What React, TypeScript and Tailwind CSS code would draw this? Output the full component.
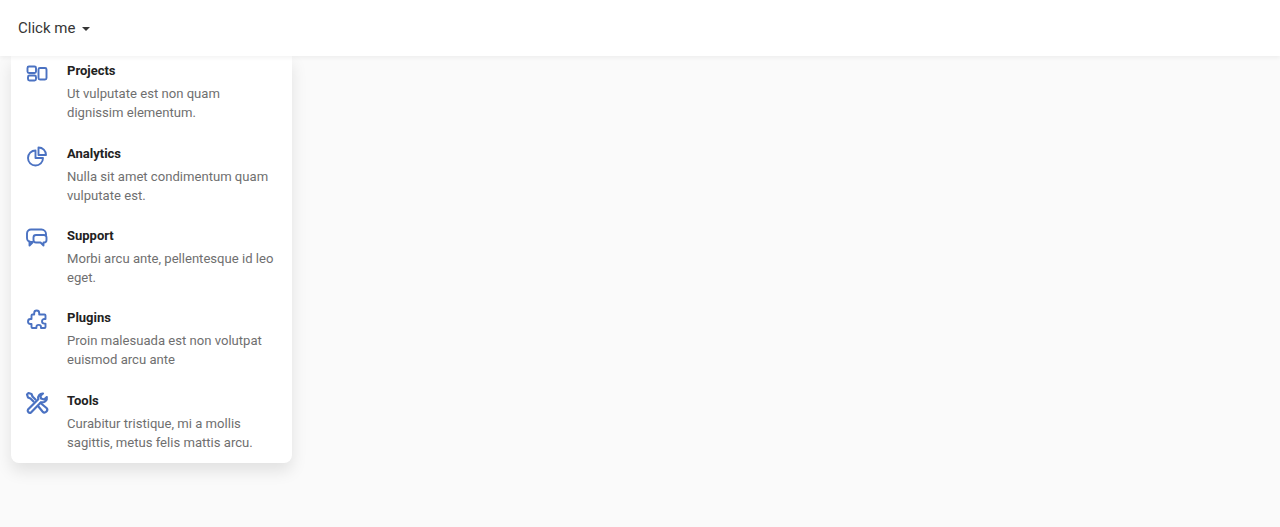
import React from "react";

const stroke = {
  fill: "none",
  stroke: "currentColor",
  strokeWidth: 1.9,
  strokeLinecap: "round" as const,
  strokeLinejoin: "round" as const,
};

function Icon({ children }: { children: React.ReactNode }) {
  return (
    <svg viewBox="0 0 24 24" width="24" height="24" className="shrink-0 text-[#4b72c2]" {...stroke}>
      {children}
    </svg>
  );
}

const items = [
  {
    title: "Projects",
    lines: ["Ut vulputate est non quam", "dignissim elementum."],
    icon: (
      <Icon>
        <rect x="2.500" y="5.500" width="8.500" height="6.500" rx="1.500" />
        <rect x="3" y="14.500" width="8" height="5" rx="1.500" />
        <rect x="13.500" y="7" width="8" height="11.500" rx="1.500" />
      </Icon>
    ),
  },
  {
    title: "Analytics",
    lines: ["Nulla sit amet condimentum quam", "vulputate est."],
    icon: (
      <Icon>
        <path d="M10.500 6.500a7.500 7.500 0 1 0 7.500 7.500h-7.500z" />
        <path d="M13.500 3.500a7.500 7.500 0 0 1 7.500 7.500h-7.500z" />
      </Icon>
    ),
  },
  {
    title: "Support",
    lines: ["Morbi arcu ante, pellentesque id leo", "eget."],
    icon: (
      <Icon>
        <path d="M7.500 16H6a4 4 0 0 1-4-4V7.500a4 4 0 0 1 4-4h10.500a4.500 4.500 0 0 1 4.500 4.500v1" />
        <path d="M4.500 15.500v4l3-3" />
        <path d="M11 9h8a2.500 2.500 0 0 1 2.500 2.500v2.500a2.500 2.500 0 0 1-2.500 2.500h-.5v3l-3-3H11a2.500 2.500 0 0 1-2.500-2.500v-2.500A2.500 2.500 0 0 1 11 9z" />
      </Icon>
    ),
  },
  {
    title: "Plugins",
    lines: ["Proin malesuada est non volutpat", "euismod arcu ante"],
    icon: (
      <Icon>
        <path d="M9.200 6.500V5a2.500 2.500 0 0 1 5 0v1.500h5.300a1 1 0 0 1 1 1V11h-1.200a2.300 2.300 0 0 0 0 4.600h1.200V19a1 1 0 0 1-1 1H16v-.8a2.300 2.300 0 0 0-4.600 0v.8H7.500a1 1 0 0 1-1-1v-3h-1a2.500 2.500 0 0 1 0-5h1V7.500a1 1 0 0 1 1-1z" />
      </Icon>
    ),
  },
  {
    title: "Tools",
    lines: ["Curabitur tristique, mi a mollis", "sagittis, metus felis mattis arcu."],
    icon: (
      <Icon>
        <path strokeWidth="2.200" d="M18 2.500a4.500 4.500 0 0 0-4.700 5.800L3 18.500a2.200 2.200 0 0 0 3 3L16 11.200a4.500 4.500 0 0 0 5.800-5.200L19 8.500l-3-1-.5-2.700z" />
        <path strokeWidth="2.200" d="M8.500 10.500l-3-3-2.500-1-1-3L3.500 2l3 1 1 2.500 3 3" />
        <path strokeWidth="2.200" d="M13 15l4.500 5.500a2.500 2.500 0 0 0 4-3.500l-6-5" />
      </Icon>
    ),
  },
];

export default function App() {
  return (
    <div className="relative h-[527px] overflow-hidden bg-[#fafafa] font-['Roboto',sans-serif]">
      <header className="relative z-20 flex h-14 items-center bg-white pl-[18px] shadow-[0_2px_4px_rgba(0,0,0,0.05)]">
        <span className="text-[15px] leading-6 text-[#363636]">Click me</span>
        <span className="ml-[7px] mt-0.5 h-0 w-0 border-x-4 border-t-4 border-x-transparent border-t-[#363636]" />
      </header>
      <nav className="absolute left-[11px] top-[56px] z-10 flex w-[281px] flex-col gap-[10.400px] rounded-b-lg bg-white pl-[14px] pt-[5.200px] shadow-[0_8px_16px_rgba(10,10,10,0.1)]">
        {items.map((item) => (
          <div key={item.title} className="flex h-[72px] items-start">
            {item.icon}
            <div className="ml-[18px]">
              <div className="text-[13px] font-bold leading-5 text-[#222222]">{item.title}</div>
              <p className="mt-[3.100px] whitespace-nowrap text-[13.100px] leading-[19px] text-[#6f6f6f]">
                {item.lines[0]}
                <br />
                {item.lines[1]}
              </p>
            </div>
          </div>
        ))}
      </nav>
    </div>
  );
}
